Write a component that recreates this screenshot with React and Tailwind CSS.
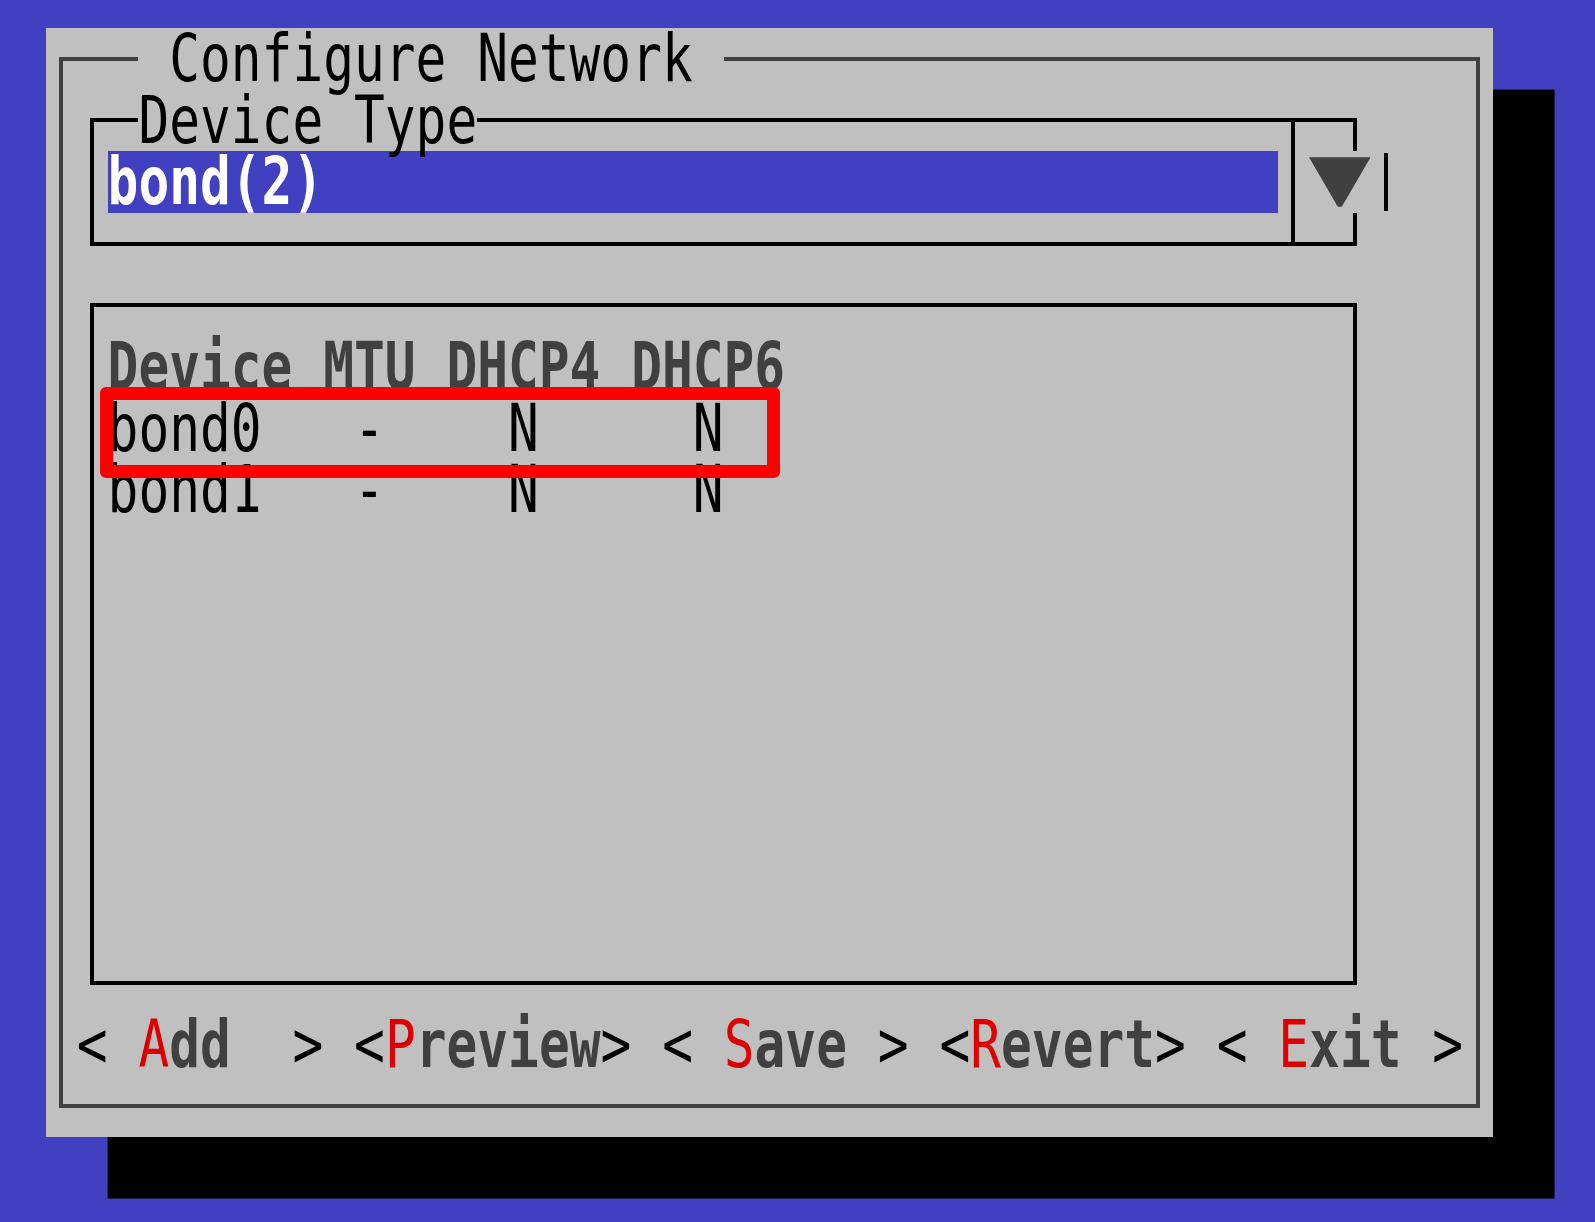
import React from "react";

// one terminal cell is 30.8 x 61.6 px; text is stretched to the tall cell
const T = ({ className = "", children }) => (
  <div
    className={`whitespace-pre font-['DejaVu_Sans_Mono',monospace] text-[51.16px] leading-[61.6px] ${className}`}
  >
    <div className="scale-y-[1.3]">{children}</div>
  </div>
);

const Btn = ({ hot, rest, open = "<", close = ">", pad = "" }) => (
  <>
    <span className="text-black">{open}</span>
    {pad}
    <span className="text-[#dd0000]">{hot}</span>
    <span className="font-bold text-[#404040]">{rest}</span>
    {pad}
    <span className="text-black">{close}</span>
  </>
);

const App = () => {
  return (
    <div className="relative w-[1595px] h-[1222px] overflow-hidden bg-[#4040c0] pl-[46px] pt-[28px]">
      <div className="grid grid-cols-[repeat(47,30.8px)] grid-rows-[repeat(18,61.6px)] bg-[#c0c0c0] shadow-[61.6px_61.6px_0_0_#000] w-max">
        {/* outer frame */}
        <div className="col-start-1 col-end-48 row-start-1 row-end-19 mx-[13.4px] my-[28.8px] border-4 border-[#404040]" />

        {/* device type box */}
        <div className="col-start-2 col-end-44 row-start-2 row-end-5 mx-[13.4px] my-[28.8px] border-4 border-black" />
        <div className="col-start-41 row-start-2 row-end-5 justify-self-center w-[4px] my-[28.8px] bg-black" />

        {/* list box */}
        <div className="col-start-2 col-end-44 row-start-5 row-end-17 mx-[13.4px] my-[28.8px] border-4 border-black" />

        {/* titles */}
        <T className="col-start-4 col-end-23 row-start-1 bg-[#c0c0c0] text-black">
          {" Configure Network "}
        </T>
        <T className="col-start-4 col-end-15 row-start-2 bg-[#c0c0c0] text-black">Device Type</T>

        {/* selected value */}
        <T className="col-start-3 col-end-41 row-start-3 bg-[#4040c0] font-bold text-white">bond(2)</T>

        {/* dropdown arrow */}
        <div className="col-start-42 col-span-2 row-start-3 flex items-center justify-center bg-[#c0c0c0]">
          <svg width="62" height="50" viewBox="0 0 62 50">
            <polygon points="0,0 62,0 33,50 29,50" fill="#404040" />
          </svg>
        </div>
        <div className="col-start-44 row-start-3 justify-self-center w-[4px] my-[2px] bg-black" />

        {/* table */}
        <T className="col-start-3 col-end-42 row-start-6 font-bold text-[#404040]">Device MTU DHCP4 DHCP6</T>
        <T className="col-start-3 col-end-42 row-start-7 text-black">{"bond0   -    N     N"}</T>
        <T className="col-start-3 col-end-42 row-start-8 text-black">{"bond1   -    N     N"}</T>

        {/* buttons */}
        <T className="col-start-2 col-end-47 row-start-17">
          <Btn hot="A" rest="dd " pad=" " />
          {" "}
          <Btn hot="P" rest="review" />
          {" "}
          <Btn hot="S" rest="ave" pad=" " />
          {" "}
          <Btn hot="R" rest="evert" />
          {" "}
          <Btn hot="E" rest="xit" pad=" " />
        </T>
      </div>

      {/* highlight */}
      <div className="absolute left-[100px] top-[387px] w-[680px] h-[91px] rounded-[6px] border-[13px] border-[#ff0000]" />
    </div>
  );
};

export default App;
